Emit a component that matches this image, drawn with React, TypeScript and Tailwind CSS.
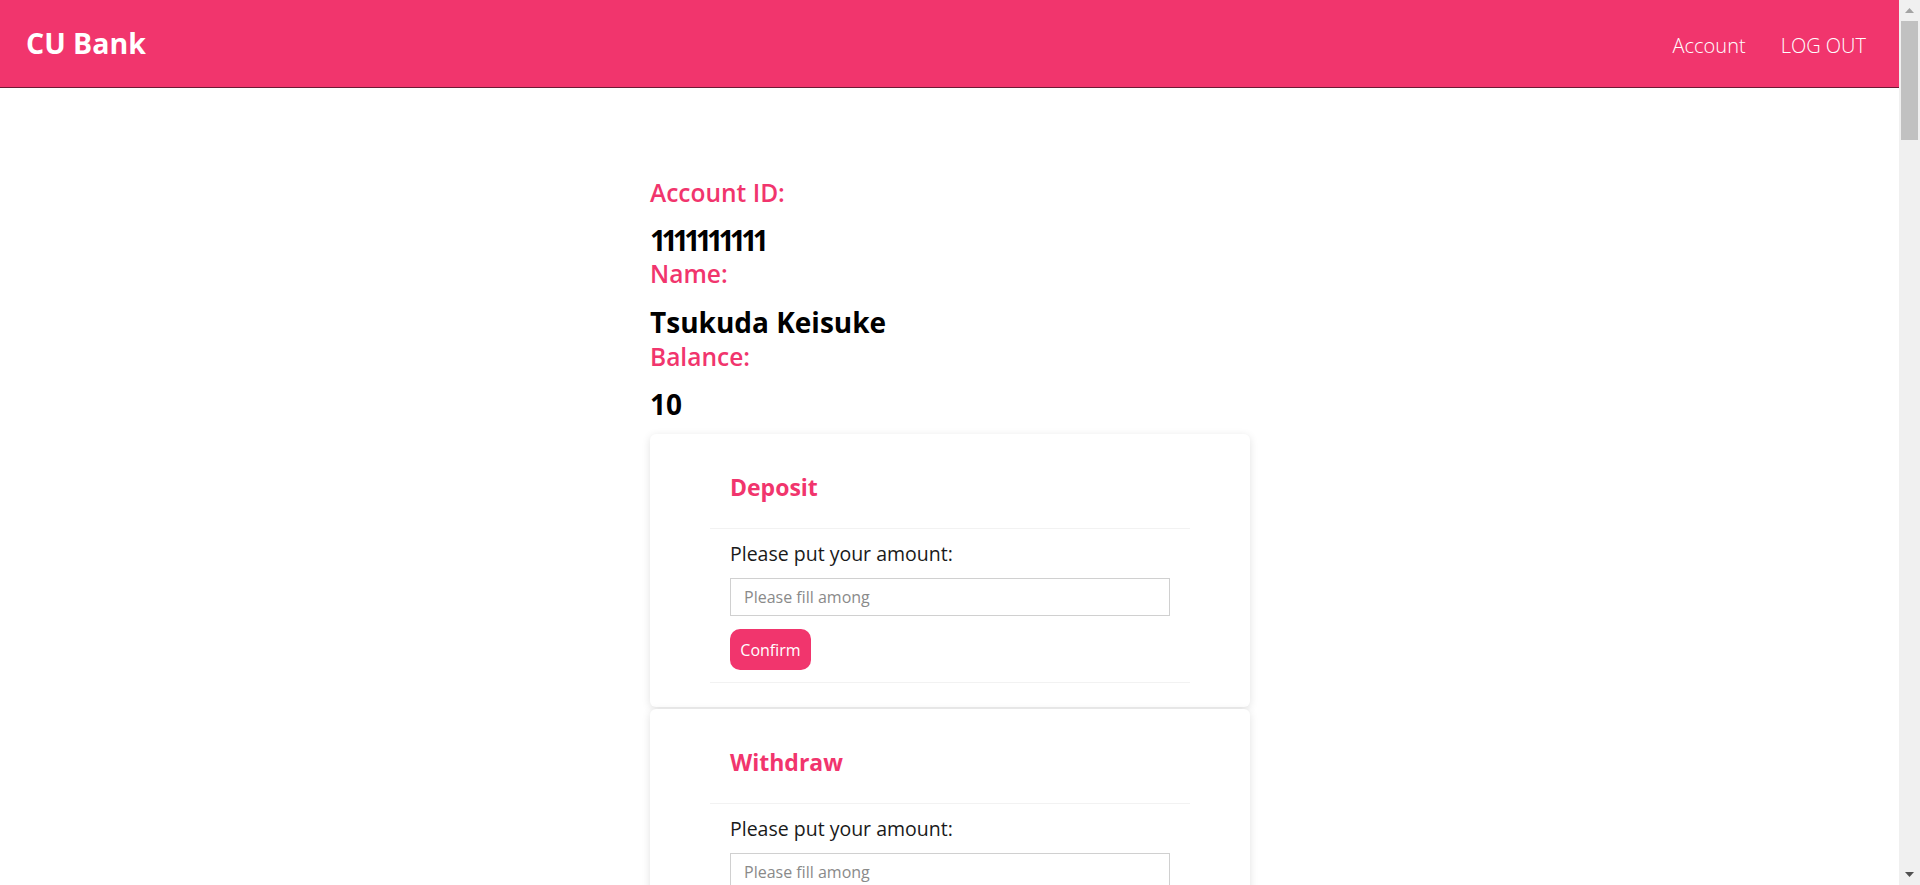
import React from "react";

const font = { fontFamily: "'Open Sans', 'Noto Sans', sans-serif" };

function ActionCard({ title }: { title: string }) {
  return (
    <div className="w-[600px] rounded-md bg-white px-[60px] shadow-[0_2px_8px_rgba(0,0,0,0.12)]">
      <div className="border-b border-[#f2f2f2] px-5 pt-[39px] pb-[26px]">
        <h2 className="text-[23px] font-bold leading-[29px] text-[#f1356d]">{title}</h2>
      </div>
      <div className="px-5 pt-[13px] pb-[12px]">
        <p className="text-[19.5px] leading-[24px] text-[#1a1a1a]">Please put your amount:</p>
        <input
          type="text"
          placeholder="Please fill among"
          className="mt-[12px] block h-[38px] w-[440px] border border-[#d0d0d0] px-[13px] text-[16px] text-[#333] placeholder:text-[#8a8a8a] outline-none"
        />
        <button className="mt-[13px] block h-[41px] w-[81px] rounded-[10px] bg-[#f1356d] text-[16px] text-white">
          Confirm
        </button>
      </div>
      <div className="h-[25px] border-t border-[#f2f2f2]" />
    </div>
  );
}

function Scrollbar() {
  return (
    <div className="flex h-screen w-[21px] shrink-0 flex-col bg-[#f0f0f0]">
      <div className="flex h-[21px] items-center justify-center">
        <svg width="9" height="5" viewBox="0 0 9 5">
          <path d="M4.5 0L9 5H0z" fill="#a3a3a3" />
        </svg>
      </div>
      <div className="mx-[2px] h-[119px] bg-[#c1c1c1]" />
      <div className="flex-1" />
      <div className="flex h-[21px] items-center justify-center">
        <svg width="9" height="5" viewBox="0 0 9 5">
          <path d="M0 0H9L4.5 5z" fill="#505050" />
        </svg>
      </div>
    </div>
  );
}

export default function App() {
  return (
    <div className="flex h-screen overflow-hidden bg-white" style={font}>
      <div className="min-w-0 flex-1 overflow-hidden">
        <nav className="flex h-[88px] items-center justify-between border-b border-[#6e1a35] bg-[#f1356d] pl-[26px] pr-[33px]">
          <span className="text-[28.5px] font-bold text-white">CU Bank</span>
          <div className="flex items-center gap-[35px] pt-[4px] text-[20px] font-light text-white">
            <a>Account</a>
            <a>LOG OUT</a>
          </div>
        </nav>
        <main className="pl-[650px] pt-[89px] pb-[40px]">
          <div className="text-[24.5px] font-semibold leading-[32px] text-[#f1356d]">Account ID:</div>
          <div className="mt-[14px] text-[28px] font-bold leading-[34px] tracking-[-4.6px] text-black">1111111111</div>
          <div className="pt-[1px] text-[24.5px] font-semibold leading-[32px] text-[#f1356d]">Name:</div>
          <div className="mt-[15px] text-[28px] font-bold leading-[34px] text-black">Tsukuda Keisuke</div>
          <div className="pt-[2px] text-[24.5px] font-semibold leading-[32px] text-[#f1356d]">Balance:</div>
          <div className="mt-[14px] text-[28px] font-bold leading-[34px] text-black">10</div>
          <div className="mt-[13px] flex flex-col gap-[2px]">
            <ActionCard title="Deposit" />
            <ActionCard title="Withdraw" />
          </div>
        </main>
      </div>
      <Scrollbar />
    </div>
  );
}
